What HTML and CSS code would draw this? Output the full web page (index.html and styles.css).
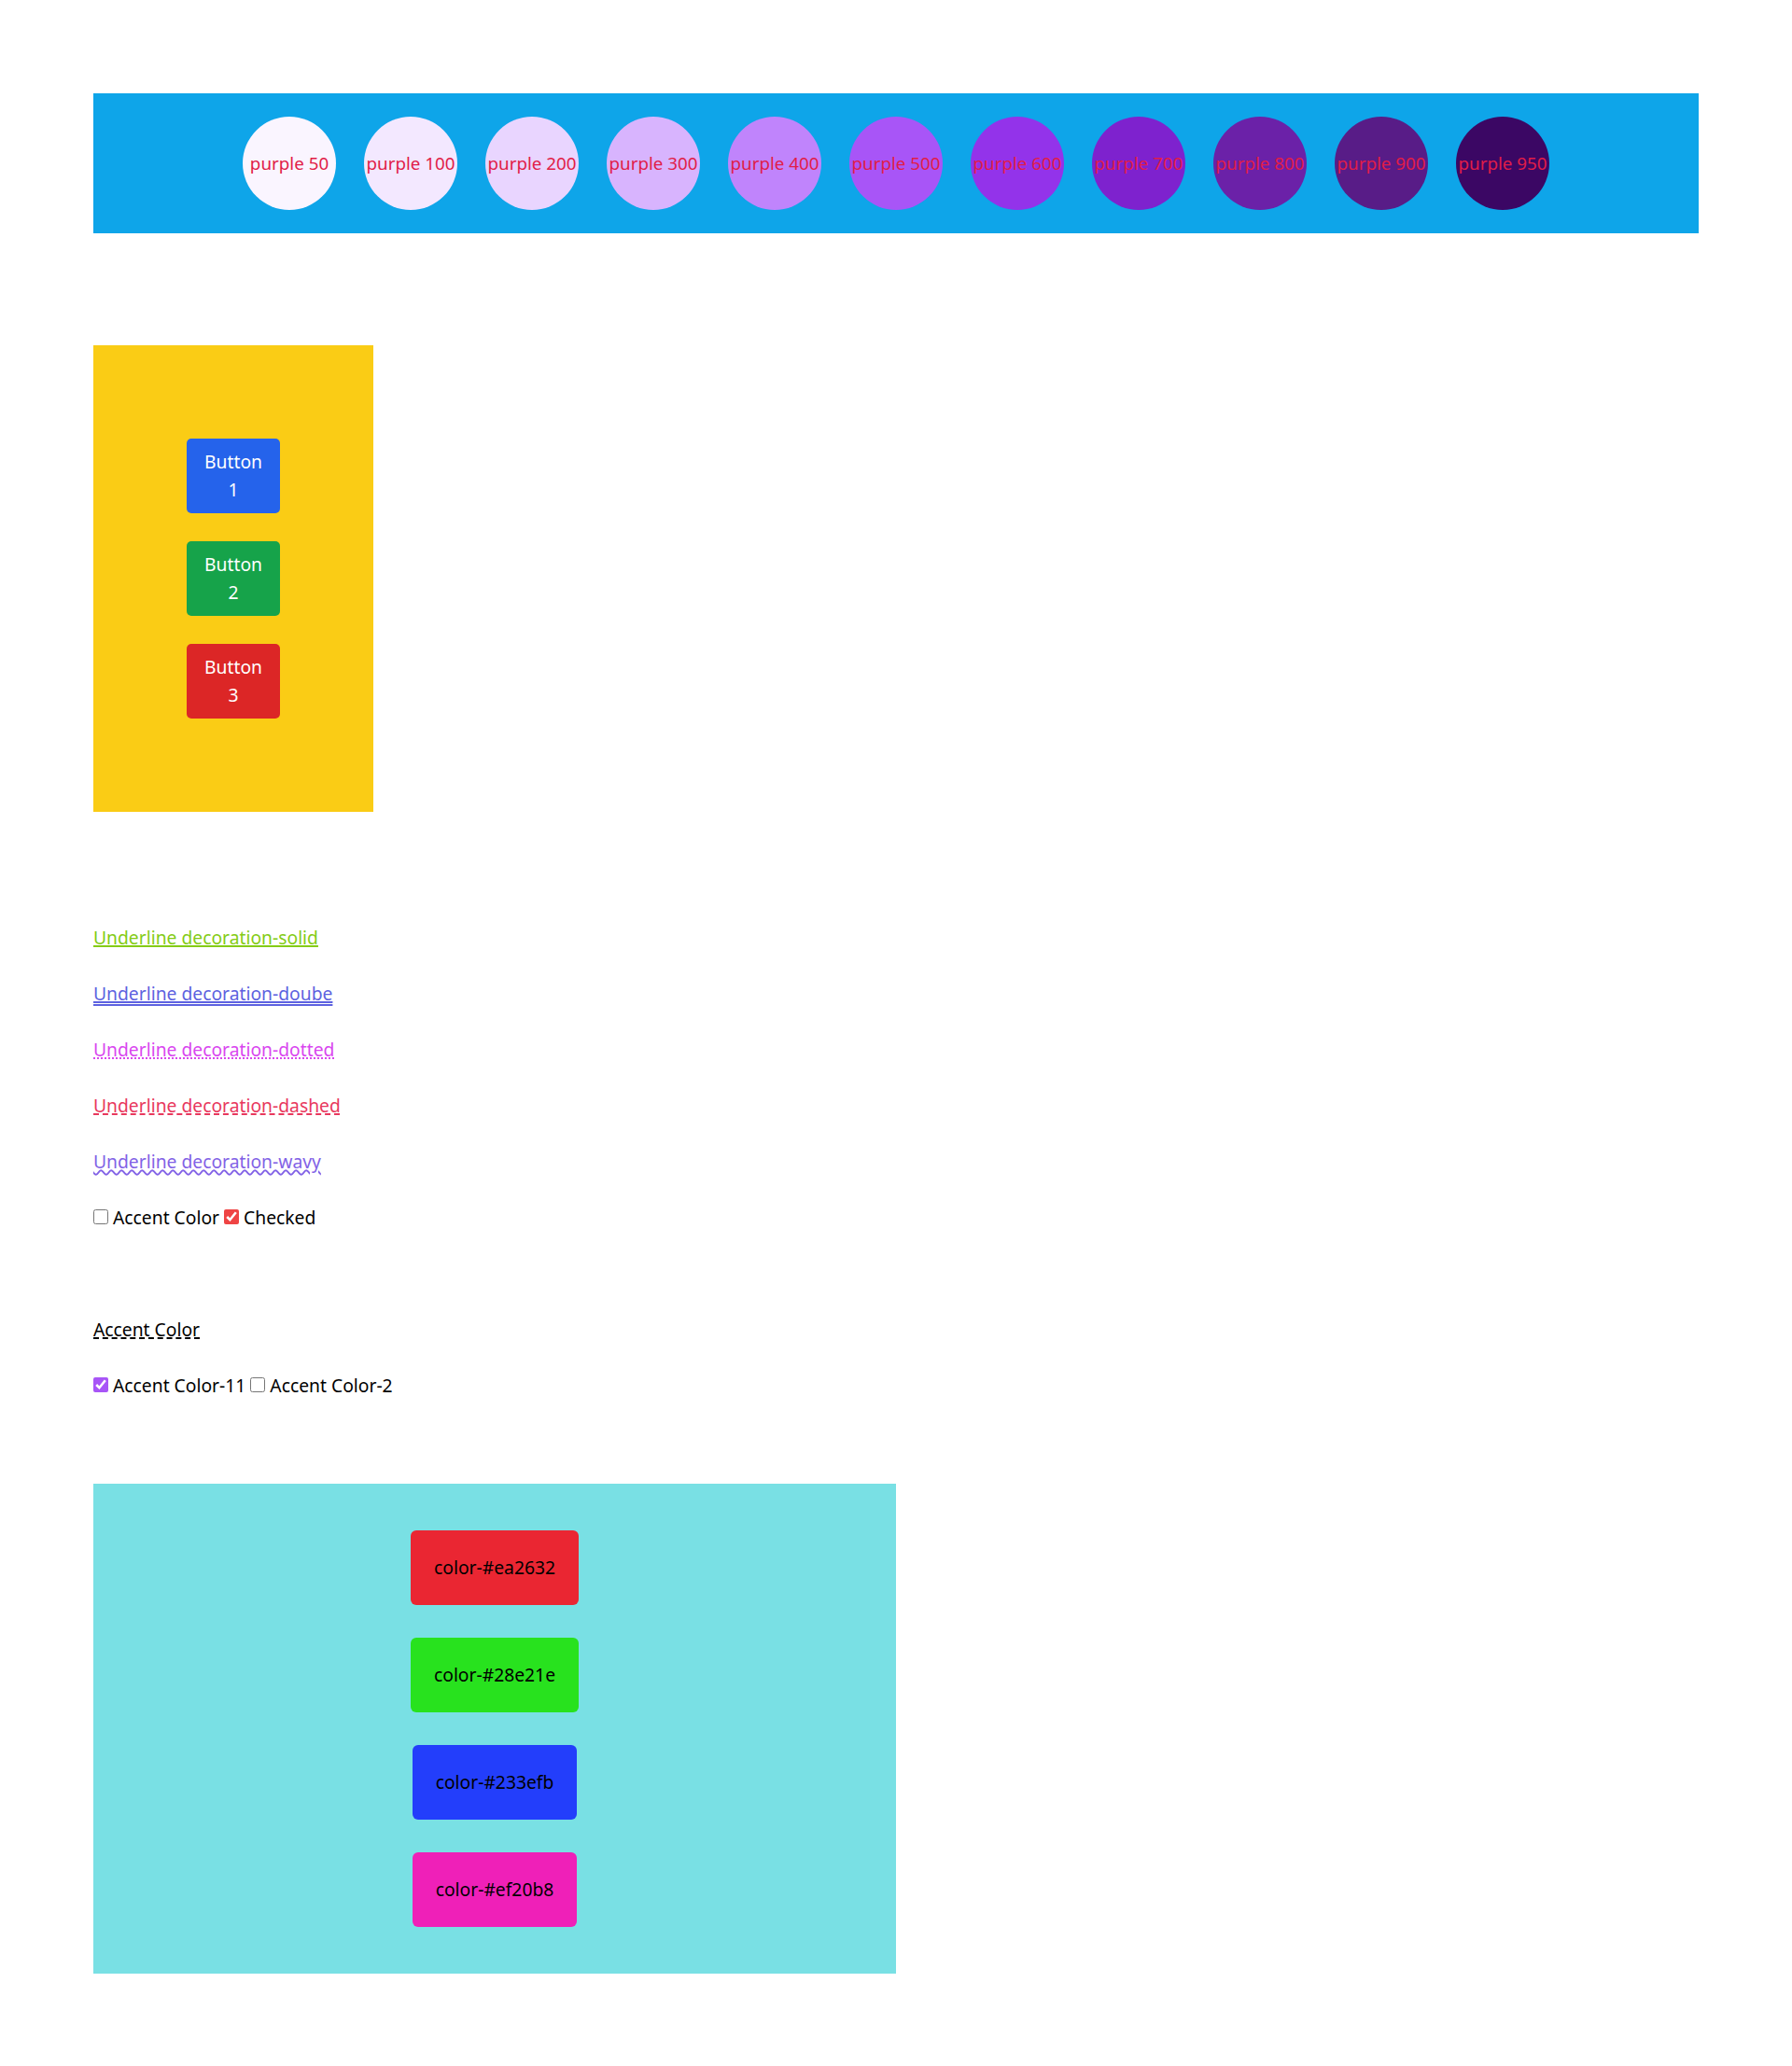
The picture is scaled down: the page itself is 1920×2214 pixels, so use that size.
FILE: index.html
```html
<!DOCTYPE html>
<html lang="en">
<head>
<meta charset="utf-8">
<title>Tailwind demo</title>
<link rel="stylesheet" href="styles.css">
</head>
<body>
<div class="page">
  <div class="bar">
    <div class="circle p50">purple 50</div>
    <div class="circle p100">purple 100</div>
    <div class="circle p200">purple 200</div>
    <div class="circle p300">purple 300</div>
    <div class="circle p400">purple 400</div>
    <div class="circle p500">purple 500</div>
    <div class="circle p600">purple 600</div>
    <div class="circle p700">purple 700</div>
    <div class="circle p800">purple 800</div>
    <div class="circle p900">purple 900</div>
    <div class="circle p950">purple 950</div>
  </div>

  <div class="yellow">
    <button class="btn btn-blue">Button 1</button>
    <button class="btn btn-green">Button 2</button>
    <button class="btn btn-red">Button 3</button>
  </div>

  <div class="links">
    <p class="line u-solid">Underline decoration-solid</p>
    <p class="line u-double">Underline decoration-doube</p>
    <p class="line u-dotted">Underline decoration-dotted</p>
    <p class="line u-dashed">Underline decoration-dashed</p>
    <p class="line u-wavy">Underline decoration-wavy</p>
    <p class="line checks"><input type="checkbox" class="cb"> Accent Color <input type="checkbox" class="cb cb-red" checked> Checked</p>
  </div>

  <div class="accent">
    <p class="line accent-title">Accent Color</p>
    <p class="line checks"><input type="checkbox" class="cb cb-purple" checked> Accent Color-11 <input type="checkbox" class="cb"> Accent Color-2</p>
  </div>

  <div class="cyan">
    <button class="cbtn c1">color-#ea2632</button>
    <button class="cbtn c2">color-#28e21e</button>
    <button class="cbtn c3">color-#233efb</button>
    <button class="cbtn c4">color-#ef20b8</button>
  </div>
</div>
</body>
</html>
```

FILE: styles.css
```css
html, body {
  margin: 0;
  padding: 0;
  background: #ffffff;
}

body {
  font-family: "Noto Sans", "Open Sans", sans-serif;
  font-size: 19.3px;
  line-height: 30px;
  color: #000000;
}

.page {
  padding: 100px;
}

.bar {
  height: 150px;
  background: #0ea5e9;
  display: flex;
  justify-content: center;
  align-items: center;
  gap: 30px;
}

.circle {
  width: 100px;
  height: 100px;
  border-radius: 50%;
  display: flex;
  justify-content: center;
  align-items: center;
  white-space: nowrap;
  color: #e11d48;
  font-size: 18.8px;
  flex: 0 0 auto;
}

.p50 { background: #faf5ff; }
.p100 { background: #f3e8ff; }
.p200 { background: #e9d5ff; }
.p300 { background: #d8b4fe; }
.p400 { background: #c084fc; }
.p500 { background: #a855f7; }
.p600 { background: #9333ea; }
.p700 { background: #7e22ce; }
.p800 { background: #6b21a8; }
.p900 { background: #581c87; }
.p950 { background: #3b0764; }

.yellow {
  margin-top: 120px;
  width: 300px;
  height: 500px;
  background: #facc15;
  display: flex;
  flex-direction: column;
  align-items: center;
  justify-content: center;
  gap: 30px;
}

.btn {
  width: 100px;
  height: 80px;
  padding: 10px 14px;
  border: none;
  border-radius: 5px;
  color: #ffffff;
  font: inherit;
  line-height: 30px;
  text-align: center;
  box-sizing: border-box;
}

.btn-blue { background: #2563eb; }
.btn-green { background: #16a34a; }
.btn-red { background: #dc2626; }

.links {
  margin-top: 120px;
}

.line {
  margin: 0 0 30px 0;
  line-height: 30px;
}

.links .line:last-child {
  margin-bottom: 0;
}

.u-solid {
  color: #84cc16;
  text-decoration: underline solid #84cc16;
  text-decoration-thickness: 2px;
}

.u-double {
  color: #5d62e0;
  text-decoration: underline double #5d62e0;
  text-decoration-thickness: 1.5px;
}

.u-dotted {
  color: #d946ef;
  text-decoration: underline dotted #d946ef;
  text-decoration-thickness: 2px;
}

.u-dashed {
  color: #e8385e;
  text-decoration: underline dashed #e8385e;
  text-decoration-thickness: 2px;
}

.u-wavy {
  color: #8262e6;
  text-decoration: underline wavy #8262e6;
  text-decoration-thickness: 1.5px;
}

.cb {
  width: 16px;
  height: 16px;
  margin: 0;
  vertical-align: baseline;
}

.cb-red { accent-color: #ef4444; }
.cb-purple { accent-color: #a855f7; }

.accent {
  margin-top: 90px;
}

.accent .line:last-child {
  margin-bottom: 0;
}

.accent-title {
  text-decoration: underline dashed #000000;
  text-decoration-thickness: 1.5px;
}

.cyan {
  margin-top: 90px;
  width: 50%;
  background: #79e0e4;
  padding: 50px 0;
  display: flex;
  flex-direction: column;
  align-items: center;
  gap: 35px;
}

.cbtn {
  padding: 25px 25px;
  border: none;
  border-radius: 6px;
  font: inherit;
  line-height: 30px;
  color: #000000;
}

.c1 { background: #ea2632; }
.c2 { background: #28e21e; }
.c3 { background: #233efb; }
.c4 { background: #ef20b8; }
```
